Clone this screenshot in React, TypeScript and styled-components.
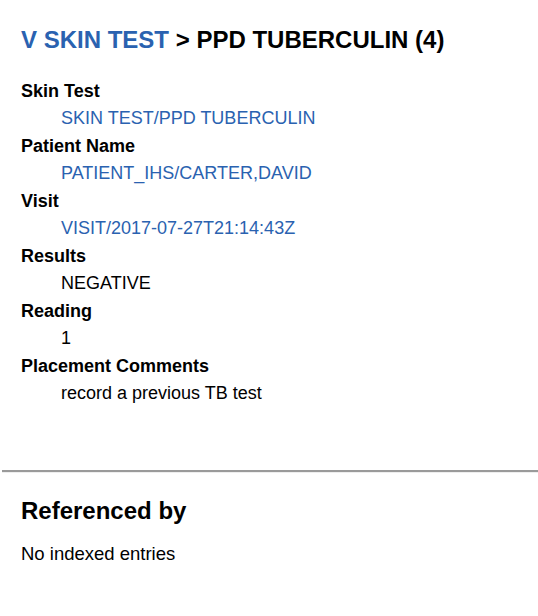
import React from "react";
import styled, { createGlobalStyle } from "styled-components";

const GlobalStyle = createGlobalStyle`
  html, body {
    margin: 0;
    padding: 0;
    background: #ffffff;
  }
  body {
    font-family: "Liberation Sans", Arial, Helvetica, sans-serif;
    color: #000000;
  }
`;

const Page = styled.div`
  width: 538px;
  overflow: hidden;
`;

const Section = styled.section<{ top?: number }>`
  padding: ${(p) => p.top || 0}px 21px 0 21px;
`;

const Title = styled.h1`
  margin: 0;
  font-size: 24px;
  font-weight: bold;
  line-height: 28px;
  white-space: nowrap;
`;

const Link = styled.a`
  color: #2a62b0;
  text-decoration: none;
`;

const Fields = styled.dl`
  margin: 24px 0 0 0;
`;

const Label = styled.dt`
  font-size: 18px;
  font-weight: bold;
  line-height: 26px;
`;

const Value = styled.dd`
  margin: 0 0 0 40px;
  font-size: 18px;
  line-height: 29px;
`;

const Rule = styled.hr`
  margin: 62px 0 0 2px;
  height: 0;
  border: none;
  border-top: 2px solid #9a9a9a;
  border-bottom: 1px solid #eeeeee;
`;

const SubTitle = styled.h2`
  margin: 0;
  font-size: 24px;
  font-weight: bold;
  line-height: 28px;
`;

const Note = styled.p`
  margin: 19px 0 0 0;
  font-size: 18.5px;
  line-height: 20px;
`;

type Field = { label: string; value: string; link?: boolean };

const fields: Field[] = [
  { label: "Skin Test", value: "SKIN TEST/PPD TUBERCULIN", link: true },
  { label: "Patient Name", value: "PATIENT_IHS/CARTER,DAVID", link: true },
  { label: "Visit", value: "VISIT/2017-07-27T21:14:43Z", link: true },
  { label: "Results", value: "NEGATIVE" },
  { label: "Reading", value: "1" },
  { label: "Placement Comments", value: "record a previous TB test" },
];

export default function App() {
  return (
    <Page>
      <GlobalStyle />
      <Section top={26}>
        <Title>
          <Link href="#">V SKIN TEST</Link> &gt; PPD TUBERCULIN (4)
        </Title>
        <Fields>
          {fields.map((f) => (
            <React.Fragment key={f.label}>
              <Label>{f.label}</Label>
              <Value>{f.link ? <Link href="#">{f.value}</Link> : f.value}</Value>
            </React.Fragment>
          ))}
        </Fields>
      </Section>
      <Rule />
      <Section top={24}>
        <SubTitle>Referenced by</SubTitle>
        <Note>No indexed entries</Note>
      </Section>
    </Page>
  );
}
